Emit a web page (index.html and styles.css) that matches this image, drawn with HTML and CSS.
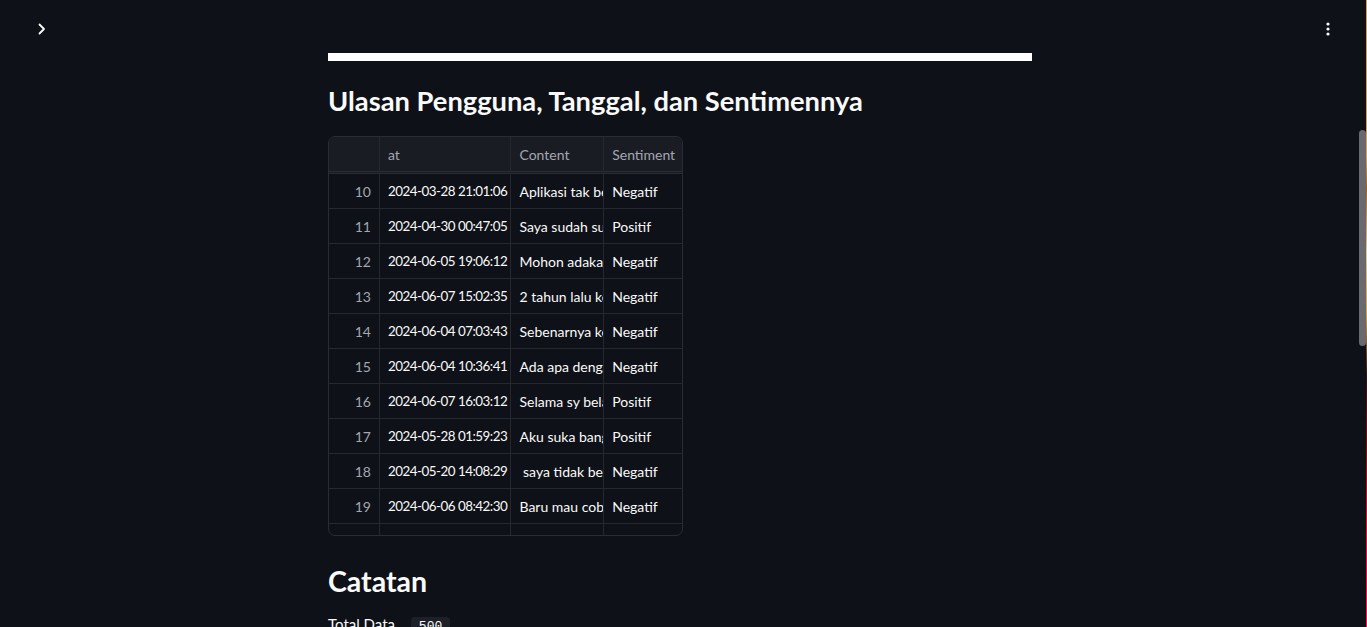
FILE: index.html
```html
<!DOCTYPE html>
<html>
<head>
<meta charset="utf-8">
<link rel="stylesheet" href="styles.css">
</head>
<body>
<div class="app">
  <header class="topbar">
    <button class="icon-btn expand" aria-label="expand">
      <svg width="16" height="16" viewBox="0 0 16 16"><path d="M5.5 3.5 L10 8 L5.5 12.5" fill="none" stroke="#fafafa" stroke-width="1.8" stroke-linecap="round" stroke-linejoin="round"/></svg>
    </button>
    <button class="icon-btn menu" aria-label="menu">
      <svg width="6" height="16" viewBox="0 0 6 16"><circle cx="3" cy="3" r="1.6" fill="#fafafa"/><circle cx="3" cy="8" r="1.6" fill="#fafafa"/><circle cx="3" cy="13" r="1.6" fill="#fafafa"/></svg>
    </button>
  </header>
  <main class="main">
    <div class="bar"></div>
    <h3 class="h3">Ulasan Pengguna, Tanggal, dan Sentimennya</h3>
    <div class="grid">
      <div class="row head">
        <div class="c idx"></div>
        <div class="c at">at</div>
        <div class="c content">Content</div>
        <div class="c sent">Sentiment</div>
      </div>
      <div class="body">
        <div class="row"><div class="c idx">10</div><div class="c at">2024-03-28 21:01:06</div><div class="c content">Aplikasi tak bercerita</div><div class="c sent">Negatif</div></div>
        <div class="row"><div class="c idx">11</div><div class="c at">2024-04-30 00:47:05</div><div class="c content">Saya sudah sulit login</div><div class="c sent">Positif</div></div>
        <div class="row"><div class="c idx">12</div><div class="c at">2024-06-05 19:06:12</div><div class="c content">Mohon adakan fitur</div><div class="c sent">Negatif</div></div>
        <div class="row"><div class="c idx">13</div><div class="c at">2024-06-07 15:02:35</div><div class="c content">2 tahun lalu koneksi</div><div class="c sent">Negatif</div></div>
        <div class="row"><div class="c idx">14</div><div class="c at">2024-06-04 07:03:43</div><div class="c content">Sebenarnya kenapa</div><div class="c sent">Negatif</div></div>
        <div class="row"><div class="c idx">15</div><div class="c at">2024-06-04 10:36:41</div><div class="c content">Ada apa dengan aplikasi</div><div class="c sent">Negatif</div></div>
        <div class="row"><div class="c idx">16</div><div class="c at">2024-06-07 16:03:12</div><div class="c content">Selama sy belajar</div><div class="c sent">Positif</div></div>
        <div class="row"><div class="c idx">17</div><div class="c at">2024-05-28 01:59:23</div><div class="c content">Aku suka banget</div><div class="c sent">Positif</div></div>
        <div class="row"><div class="c idx">18</div><div class="c at">2024-05-20 14:08:29</div><div class="c content">&nbsp;saya tidak berhasil</div><div class="c sent">Negatif</div></div>
        <div class="row"><div class="c idx">19</div><div class="c at">2024-06-06 08:42:30</div><div class="c content">Baru mau coba</div><div class="c sent">Negatif</div></div>
        <div class="row"><div class="c idx">20</div><div class="c at">2024-06-01 10:00:00</div><div class="c content">Bagus</div><div class="c sent">Positif</div></div>
      </div>
    </div>
    <h2 class="h2">Catatan</h2>
    <p class="para">Total Data <code class="code">500</code></p>
  </main>
  <div class="scrollthumb"></div>
  <div class="edge"></div>
</div>
</body>
</html>
```

FILE: styles.css
```css
* { box-sizing: border-box; }
html, body { margin: 0; padding: 0; height: 100%; overflow: hidden; }
body {
  background: #0e1117;
  color: #fafafa;
  font-family: Lato, "Noto Sans", sans-serif;
}
.app { position: relative; height: 627px; overflow: hidden; }
.topbar {
  display: flex;
  justify-content: space-between;
  align-items: flex-start;
  padding: 21px 30px 0 34px;
  height: 58px;
}
.icon-btn {
  background: none; border: 0; padding: 0; display: flex; align-items: center; justify-content: center;
  width: 16px; height: 16px;
}
.menu { width: 6px; margin-right: 6px; }
.main {
  width: 704px;
  margin: -5px 0 0 328px;
}
.bar { height: 8px; background: #ffffff; }
.h3 {
  font-size: 27.3px;
  font-weight: 700;
  margin: 22px 0 0 0;
  line-height: 36px;
}
.grid {
  margin-top: 17px;
  width: 355px;
  height: 400px;
  border: 1px solid #2a2c34;
  border-radius: 7px;
  overflow: hidden;
  font-size: 14px;
}
.row { display: flex; height: 35px; border-bottom: 1px solid #262830; }
.row.head { height: 37px; background: #1a1c24; border-bottom: 3px double #2a2c34; color: #a3a7b0; }
.c {
  padding: 0 8px;
  display: flex;
  align-items: center;
  white-space: nowrap;
  overflow: hidden;
  border-right: 1px solid #262830;
}
.idx { width: 51px; justify-content: flex-end; color: #a3a7b0; }
.at { width: 132px; }
.body .at { font-size: 13.4px; letter-spacing: -0.5px; }
.content { width: 93px; }
.sent { width: 78px; border-right: 0; }
.body .row { color: #fafafa; }
.h2 {
  font-size: 28.5px;
  font-weight: 700;
  margin: 25px 0 0 0;
  line-height: 40px;
}
.para { margin: 14px 0 0 0; font-size: 15px; }
.code {
  background: #1e2029;
  border-radius: 4px;
  padding: 2px 8px;
  font-family: "Liberation Mono", monospace;
  font-size: 13px;
  margin-left: 12px;
}
.scrollthumb {
  position: absolute;
  right: 1px; top: 130px;
  width: 7px; height: 216px;
  background: #6a6a6e;
  border-radius: 4px;
}
.edge {
  position: absolute;
  right: 0; top: 0; width: 1px; height: 627px;
  background: linear-gradient(#c9a36a 0 25%, #a0601a 30%, #d8c8a0 40%, #d2a050 50%, #2a1010 60%, #7a0a10 70%, #e0103a 85%, #ff1050 100%);
}
```
